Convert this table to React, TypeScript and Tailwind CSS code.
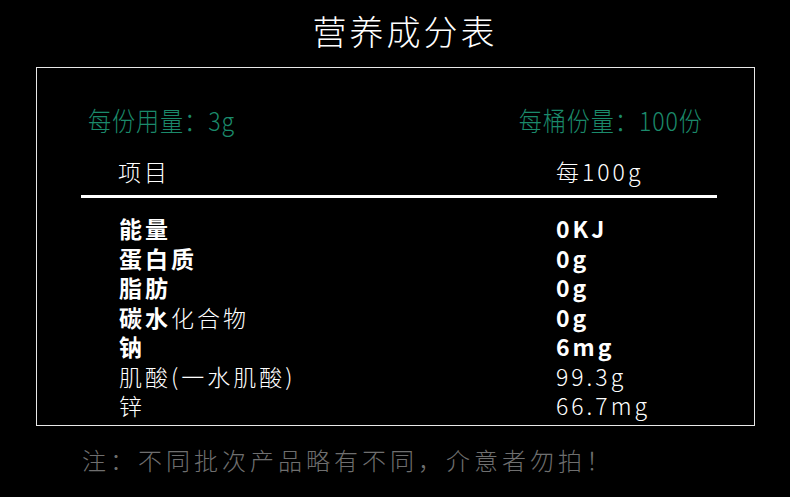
const rows: { label: [string, boolean][]; value: string; bold: boolean }[] = [
  { label: [['能量', true]], value: '0KJ', bold: true },
  { label: [['蛋白质', true]], value: '0g', bold: true },
  { label: [['脂肪', true]], value: '0g', bold: true },
  { label: [['碳水', true], ['化合物', false]], value: '0g', bold: true },
  { label: [['钠', true]], value: '6mg', bold: true },
  { label: [['肌酸(一水肌酸)', false]], value: '99.3g', bold: false },
  { label: [['锌', false]], value: '66.7mg', bold: false },
]

export default function App() {
  return (
    <div className="w-[790px] h-[497px] bg-black overflow-hidden font-['Noto_Sans_CJK_SC',sans-serif]">
      <h1 className="pt-[11px] pl-[20px] text-center text-[34px] leading-[40px] tracking-[3px] font-light text-white">
        营养成分表
      </h1>

      <div className="mt-[16px] ml-[36px] w-[719px] h-[359px] border border-[#e8e8e8]">
        <div className="mt-[37px] flex justify-between px-[51px] text-[26px] leading-[30px] tracking-[1px] text-[#1b8a6b] font-light">
          <span className="inline-block scale-x-[0.89] origin-left whitespace-nowrap">每份用量：3g</span>
          <span className="inline-block scale-x-[0.89] origin-right whitespace-nowrap">每桶份量：100份</span>
        </div>

        <div className="mt-[21px] flex text-[23px] leading-[30px] tracking-[3px] font-light text-white">
          <span className="ml-[81px] w-[438px]">项目</span>
          <span>每100g</span>
        </div>

        <div className="mt-[9px] ml-[44px] w-[636px] h-[3px] bg-white" />

        <div className="mt-[16px] flex flex-col text-[23px] leading-[29.5px] tracking-[3px] text-white">
          {rows.map((r, i) => (
            <div key={i} className="flex">
              <span className="ml-[82px] w-[437px] whitespace-nowrap">
                {r.label.map(([t, b], j) => (
                  <span key={j} className={b ? 'font-bold' : 'font-light'}>
                    {t}
                  </span>
                ))}
              </span>
              <span className={r.bold ? 'font-bold' : 'font-light'}>{r.value}</span>
            </div>
          ))}
        </div>
      </div>

      <p className="mt-[19px] ml-[82px] text-[24px] leading-[30px] tracking-[4px] font-light text-[#6f6f6f]">
        注：不同批次产品略有不同，介意者勿拍！
      </p>
    </div>
  )
}
